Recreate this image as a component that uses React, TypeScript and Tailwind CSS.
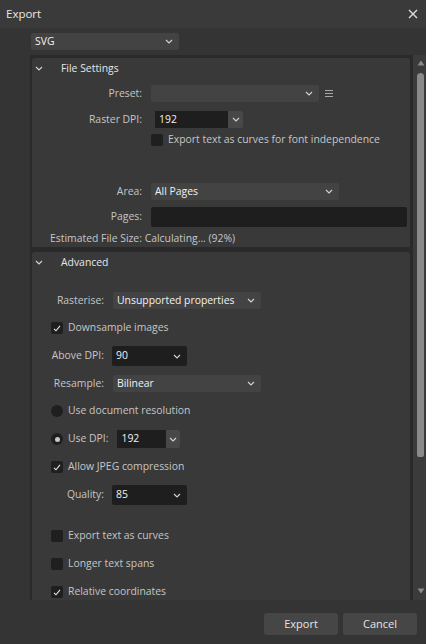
import React from "react";

const font = { fontFamily: '"Open Sans", "Noto Sans", sans-serif' };

function Chevron({ className = "" }: { className?: string }) {
  return (
    <svg width="8" height="5" viewBox="0 0 8 5" className={className}>
      <path d="M1 1l3 3 3-3" fill="none" stroke="#d0d0d0" strokeWidth="1.2" />
    </svg>
  );
}

function Select({ value, w, dark }: { value: string; w: string; dark?: boolean }) {
  return (
    <div
      className={`${w} ${dark ? "h-[20px] bg-[#1e1e1e]" : "h-[17px] bg-[#434343]"} rounded-[2px] flex items-center justify-between pl-[4px] pr-[6px] text-[#f2f2f2] whitespace-nowrap`}
    >
      <span>{value}</span>
      <Chevron />
    </div>
  );
}

function Check({ on }: { on?: boolean }) {
  return (
    <div className="w-[12px] h-[12px] rounded-[2px] bg-[#1f1f1f] flex items-center justify-center shrink-0">
      {on && (
        <svg width="8" height="7" viewBox="0 0 8 7">
          <path d="M1 3.8l2 2 4-5" fill="none" stroke="#e6e6e6" strokeWidth="1.1" />
        </svg>
      )}
    </div>
  );
}

function Radio({ on }: { on?: boolean }) {
  return (
    <div className="w-[12px] h-[12px] rounded-full bg-[#1f1f1f] flex items-center justify-center shrink-0">
      {on && <div className="w-[5px] h-[5px] rounded-full bg-[#c8c8c8]" />}
    </div>
  );
}

function CheckRow({ label, on, mt }: { label: string; on?: boolean; mt: string }) {
  return (
    <div className={`${mt} h-[12px] pl-[19px] flex items-center gap-[5px] whitespace-nowrap`}>
      <Check on={on} />
      <span>{label}</span>
    </div>
  );
}

function SectionHeader({ title }: { title: string }) {
  return (
    <div className="h-[21px] flex items-center">
      <Chevron className="ml-[3px]" />
      <span className="ml-[18px] text-[#e6e6e6]">{title}</span>
    </div>
  );
}

function AdvLabelRow({ label, children, mt, h }: { label: string; children: React.ReactNode; mt: string; h: string }) {
  return (
    <div className={`${mt} ${h} flex items-center pl-[19px]`}>
      <span className="w-[53px] text-right whitespace-nowrap">{label}</span>
      <div className="ml-[8px]">{children}</div>
    </div>
  );
}

function FileLabelRow({ label, children, mt, h }: { label: string; children: React.ReactNode; mt: string; h: string }) {
  return (
    <div className={`${mt} ${h} flex items-center`}>
      <span className="w-[110px] text-right whitespace-nowrap">{label}</span>
      <div className="ml-[9px] flex items-center flex-1">{children}</div>
    </div>
  );
}

export default function App() {
  return (
    <div
      style={font}
      className="w-[426px] h-[644px] bg-[#343434] text-[#c6c6c6] text-[10.4px] flex flex-col overflow-hidden"
    >
      {/* title bar */}
      <div className="h-[28px] bg-[#3a3a3a] flex items-center justify-between pl-[6px] pr-[8px] shrink-0">
        <span className="text-[#e8e8e8] text-[11.5px]">Export</span>
        <svg width="10" height="10" viewBox="0 0 10 10">
          <path d="M1 1l8 8M9 1l-8 8" stroke="#dcdcdc" strokeWidth="1.4" />
        </svg>
      </div>

      <div className="pl-[31px] pt-[5px] h-[27px] shrink-0">
        <Select value="SVG" w="w-[148px]" />
      </div>

      {/* scrolling panel */}
      <div className="h-[545px] flex ml-[30px] shrink-0">
        <div className="flex-1 bg-[#2a2a2a] pl-[2px] pr-[3px] pt-[3px] flex flex-col gap-[5px] overflow-hidden">
          {/* File Settings */}
          <div className="h-[189px] bg-[#393939] rounded-tl-[3px] rounded-tr-[3px] flex flex-col shrink-0">
            <SectionHeader title="File Settings" />
            <FileLabelRow label="Preset:" mt="mt-[6px]" h="h-[17px]">
              <Select value="" w="w-[168px]" />
              <div className="ml-[6px] flex flex-col gap-[1.5px]">
                <div className="w-[8px] h-[1.5px] bg-[#a8a8a8]" />
                <div className="w-[8px] h-[1.5px] bg-[#a8a8a8]" />
                <div className="w-[8px] h-[1.5px] bg-[#a8a8a8]" />
              </div>
            </FileLabelRow>
            <FileLabelRow label="Raster DPI:" mt="mt-[9px]" h="h-[17px]">
              <div className="ml-[4px] flex h-[17px]">
                <div className="w-[73px] bg-[#1e1e1e] pl-[4px] flex items-center text-[#f2f2f2]">192</div>
                <div className="w-[15px] bg-[#484848] rounded-r-[2px] flex items-center justify-center">
                  <Chevron />
                </div>
              </div>
            </FileLabelRow>
            <div className="mt-[6px] h-[12px] flex items-center pl-[119px] gap-[5px] whitespace-nowrap">
              <Check />
              <span>Export text as curves for font independence</span>
            </div>
            <FileLabelRow label="Area:" mt="mt-[37px]" h="h-[17px]">
              <Select value="All Pages" w="w-[188px]" />
            </FileLabelRow>
            <FileLabelRow label="Pages:" mt="mt-[7px]" h="h-[20px]">
              <div className="w-[256px] h-[20px] bg-[#1e1e1e] rounded-[2px]" />
            </FileLabelRow>
            <div className="mt-[4px] h-[16px] flex items-center pl-[18px] whitespace-nowrap">
              Estimated File Size: Calculating... (92%)
            </div>
          </div>

          {/* Advanced */}
          <div className="flex-1 bg-[#393939] rounded-tl-[3px] rounded-tr-[3px] flex flex-col">
            <SectionHeader title="Advanced" />
            <AdvLabelRow label="Rasterise:" mt="mt-[19px]" h="h-[17px]">
              <div className="ml-[1px]">
                <Select value="Unsupported properties" w="w-[148px]" />
              </div>
            </AdvLabelRow>
            <CheckRow label="Downsample images" on mt="mt-[13px]" />
            <AdvLabelRow label="Above DPI:" mt="mt-[12px]" h="h-[20px]">
              <Select value="90" w="w-[75px]" dark />
            </AdvLabelRow>
            <AdvLabelRow label="Resample:" mt="mt-[9px]" h="h-[17px]">
              <div className="ml-[1px]">
                <Select value="Bilinear" w="w-[148px]" />
              </div>
            </AdvLabelRow>
            <div className="mt-[13px] h-[12px] pl-[19px] flex items-center gap-[5px] whitespace-nowrap">
              <Radio />
              <span>Use document resolution</span>
            </div>
            <div className="mt-[13px] h-[18px] pl-[19px] flex items-center gap-[5px] whitespace-nowrap">
              <Radio on />
              <span>Use DPI:</span>
              <div className="ml-[4px] flex h-[18px]">
                <div className="w-[49px] bg-[#1e1e1e] pl-[4px] flex items-center text-[#f2f2f2]">192</div>
                <div className="w-[14px] bg-[#484848] rounded-r-[2px] flex items-center justify-center">
                  <Chevron />
                </div>
              </div>
            </div>
            <CheckRow label="Allow JPEG compression" on mt="mt-[13px]" />
            <AdvLabelRow label="Quality:" mt="mt-[12px]" h="h-[20px]">
              <Select value="85" w="w-[75px]" dark />
            </AdvLabelRow>
            <CheckRow label="Export text as curves" mt="mt-[25px]" />
            <CheckRow label="Longer text spans" mt="mt-[16px]" />
            <CheckRow label="Relative coordinates" on mt="mt-[16px]" />
          </div>
        </div>

        {/* scrollbar */}
        <div className="w-[13px] bg-[#3b3b3b] flex flex-col items-center pl-[2px]">
          <svg width="8" height="6" viewBox="0 0 8 6" className="mt-[5px]">
            <path d="M4 0.5L7.5 5.5H0.5z" fill="#8a8a8a" />
          </svg>
          <div className="mt-[7px] w-[7px] h-[384px] bg-[#8a8a8a] rounded-t-[4px] rounded-b-[3px]" />
          <div className="flex-1" />
          <svg width="8" height="6" viewBox="0 0 8 6" className="mb-[6px]">
            <path d="M0.5 0.5H7.5L4 5.5z" fill="#8a8a8a" />
          </svg>
        </div>
      </div>

      {/* footer buttons */}
      <div className="flex justify-end gap-[5px] pr-[9px] pt-[13px]">
        <button className="w-[74px] h-[22px] bg-[#464646] rounded-[3px] text-[#e4e4e4] text-[11px]">Export</button>
        <button className="w-[74px] h-[22px] bg-[#464646] rounded-[3px] text-[#e4e4e4] text-[11px]">Cancel</button>
      </div>
    </div>
  );
}
